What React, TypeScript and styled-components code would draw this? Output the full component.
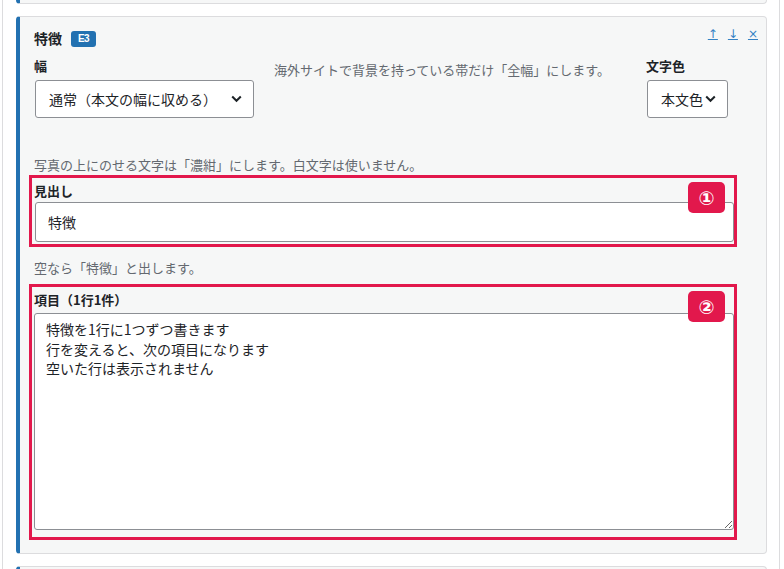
import React from 'react';
import styled, { createGlobalStyle } from 'styled-components';

const GlobalStyle = createGlobalStyle`
  html, body {
    margin: 0;
    padding: 0;
    background: #ffffff;
  }
  body {
    font-family: "Noto Sans CJK JP", "Noto Sans", "Liberation Sans", sans-serif;
    color: #1d2327;
  }
  * {
    box-sizing: border-box;
  }
`;

const Page = styled.div`
  margin-left: 2px;
  width: 778px;
  height: 569px;
  overflow: hidden;
  background: #ffffff;
  border-left: 1px solid #dcdcde;
  border-right: 1px solid #dcdcde;
  padding: 0 12px 0 13px;
  display: flex;
  flex-direction: column;
  gap: 12px;
`;

const PrevCardEnd = styled.div`
  height: 4px;
  flex-shrink: 0;
  background: #f6f7f7;
  border: 1px solid #dcdcde;
  border-top: none;
  border-left: 4px solid #2271b1;
  border-radius: 0 0 4px 4px;
`;

const Card = styled.section`
  position: relative;
  flex-shrink: 0;
  background: #f6f7f7;
  border: 1px solid #dcdcde;
  border-left: 4px solid #2271b1;
  border-radius: 4px;
  padding: 10px 32px 13px 14px;
`;

const NextCardStart = styled(Card)`
  height: 20px;
  padding: 0;
`;

const CardHeader = styled.header`
  display: flex;
  align-items: center;
  gap: 9px;
  height: 22px;
  margin-bottom: 8px;
`;

const CardTitle = styled.h3`
  margin: 0;
  font-size: 14px;
  font-weight: 700;
  line-height: 22px;
`;

const LevelBadge = styled.span`
  display: inline-flex;
  align-items: center;
  justify-content: center;
  width: 25px;
  height: 16px;
  margin-top: 1px;
  border-radius: 3px;
  background: #2271b1;
  color: #ffffff;
  font-family: "Liberation Sans", sans-serif;
  font-size: 10px;
  font-weight: 700;
  letter-spacing: -0.6px;
`;

const CardTools = styled.div`
  position: absolute;
  top: 9px;
  right: 8px;
  display: flex;
  gap: 10px;
`;

const ToolLink = styled.button`
  border: none;
  background: none;
  padding: 0;
  font-family: "DejaVu Sans", sans-serif;
  font-size: 12px;
  line-height: 16px;
  color: #3582c4;
  text-decoration: underline;
  cursor: pointer;
`;

const SettingsRow = styled.div`
  display: grid;
  grid-template-columns: 220px 1fr auto;
  column-gap: 20px;
  padding-right: 6px;
`;

const Field = styled.div`
  display: flex;
  flex-direction: column;
  gap: 5px;
`;

const FieldLabel = styled.label`
  display: block;
  font-size: 13px;
  font-weight: 700;
  line-height: 18px;
`;

const SelectBox = styled.div<{ $wide?: boolean }>`
  display: flex;
  align-items: center;
  justify-content: ${p => (p.$wide ? 'space-between' : 'flex-start')};
  gap: 2px;
  height: 38px;
  padding: 0 11px 0 13px;
  margin-left: 1px;
  background: #ffffff;
  border: 1px solid #8c8f94;
  border-radius: 3px;
  font-size: 14px;
  color: #1d2327;
`;

const Chevron = () => (
  <svg width="11" height="8" viewBox="0 0 11 8" aria-hidden="true">
    <path d="M1.2 1.5 L5.5 5.8 L9.8 1.5" fill="none" stroke="#1d2327" strokeWidth="2" />
  </svg>
);

const Note = styled.p<{ $top?: number }>`
  margin: 0;
  padding-top: ${p => p.$top ?? 0}px;
  font-size: 13px;
  line-height: 18px;
  color: #646970;
`;

const HelpText = styled(Note)<{ $gapTop: number; $gapBottom: number }>`
  margin-top: ${p => p.$gapTop}px;
  margin-bottom: ${p => p.$gapBottom}px;
`;

const Highlight = styled.div<{ $bottom: number }>`
  position: relative;
  margin: 0 -3px 0 -5px;
  border: 3px solid #e2184c;
  padding: 4px 0 ${p => p.$bottom}px 2px;
`;

const Marker = styled.span`
  position: absolute;
  top: 4px;
  right: 9px;
  width: 37px;
  height: 31px;
  border-radius: 5px;
  background: #e2184c;
  color: #ffffff;
  display: flex;
  align-items: center;
  justify-content: center;
  font-family: "DejaVu Sans", sans-serif;
  font-size: 19px;
  font-weight: 700;
`;

const BoxLabel = styled(FieldLabel)<{ $gap: number }>`
  margin-bottom: ${p => p.$gap}px;
`;

const TextInput = styled.input`
  display: block;
  width: calc(100% - 1px);
  margin-left: 1px;
  height: 40px;
  padding: 0 12px;
  background: #ffffff;
  border: 1px solid #8c8f94;
  border-radius: 3px;
  font-family: inherit;
  font-size: 14px;
  color: #1d2327;
  outline: none;
`;

const TextArea = styled.textarea`
  display: block;
  width: 100%;
  height: 217px;
  padding: 6px 11px;
  background: #ffffff;
  border: 1px solid #8c8f94;
  border-radius: 3px;
  font-family: inherit;
  font-size: 14px;
  line-height: 19.6px;
  color: #1d2327;
  resize: vertical;
  outline: none;
`;

const items = '特徴を1行に1つずつ書きます\n行を変えると、次の項目になります\n空いた行は表示されません';

const App: React.FC = () => {
  return (
    <>
      <GlobalStyle />
      <Page>
        <PrevCardEnd />
        <Card>
          <CardHeader>
            <CardTitle>特徴</CardTitle>
            <LevelBadge>E3</LevelBadge>
          </CardHeader>
          <CardTools>
            <ToolLink title="上へ">↑</ToolLink>
            <ToolLink title="下へ">↓</ToolLink>
            <ToolLink title="削除">×</ToolLink>
          </CardTools>

          <SettingsRow>
            <Field>
              <FieldLabel>幅</FieldLabel>
              <SelectBox $wide>
                <span>通常（本文の幅に収める）</span>
                <Chevron />
              </SelectBox>
            </Field>
            <Note $top={4}>海外サイトで背景を持っている帯だけ「全幅」にします。</Note>
            <Field>
              <FieldLabel>文字色</FieldLabel>
              <SelectBox>
                <span>本文色</span>
                <Chevron />
              </SelectBox>
            </Field>
          </SettingsRow>

          <HelpText $gapTop={38} $gapBottom={1}>
            写真の上にのせる文字は「濃紺」にします。白文字は使いません。
          </HelpText>

          <Highlight $bottom={2}>
            <Marker>①</Marker>
            <BoxLabel $gap={2}>見出し</BoxLabel>
            <TextInput defaultValue="特徴" />
          </Highlight>

          <HelpText $gapTop={12} $gapBottom={7}>
            空なら「特徴」と出します。
          </HelpText>

          <Highlight $bottom={7}>
            <Marker>②</Marker>
            <BoxLabel $gap={4}>項目（1行1件）</BoxLabel>
            <TextArea defaultValue={items} />
          </Highlight>
        </Card>
        <NextCardStart />
      </Page>
    </>
  );
};

export default App;
